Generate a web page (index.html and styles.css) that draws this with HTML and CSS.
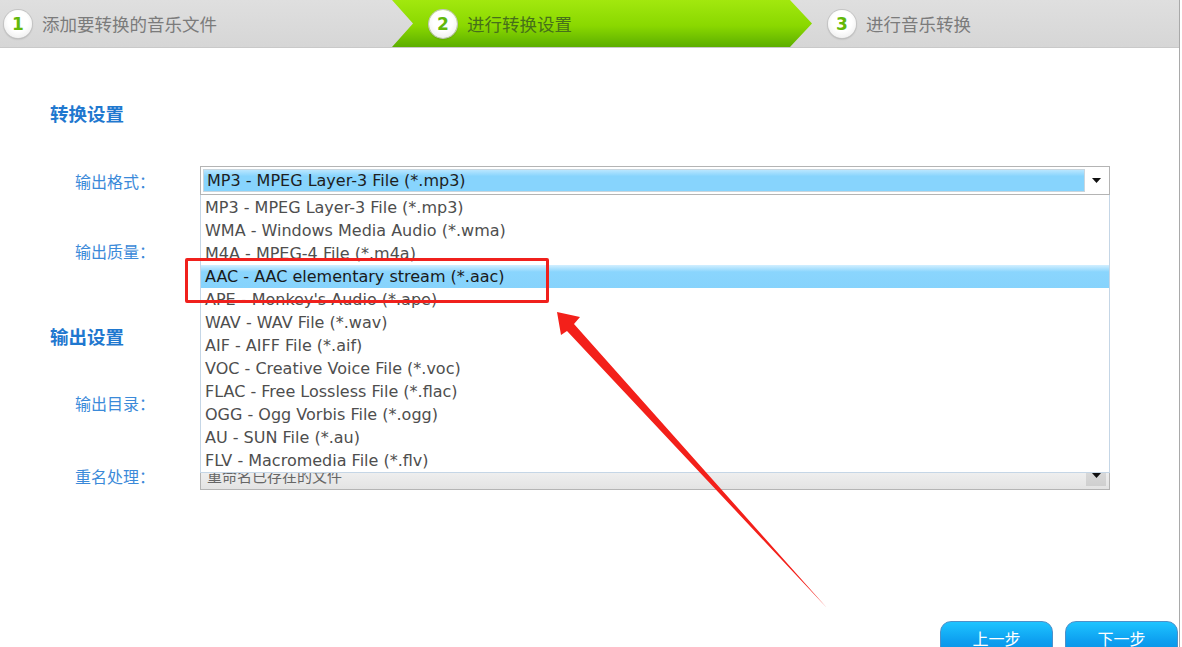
FILE: index.html
```html
<!DOCTYPE html>
<html lang="zh-CN">
<head>
  <meta charset="UTF-8">
  <title>音乐转换</title>
  <link rel="stylesheet" href="styles.css">
</head>
<body>

<div class="window">
  <div class="steps">
    <div class="step step-first">
      <span class="num">1</span>
      <span class="step-text">添加要转换的音乐文件</span>
    </div>
    <div class="step step-active">
      <span class="num">2</span>
      <span class="step-text">进行转换设置</span>
    </div>
    <div class="step step-last">
      <span class="num">3</span>
      <span class="step-text">进行音乐转换</span>
    </div>
  </div>

  <div class="content">
    <h2 class="section">转换设置</h2>

    <div class="row row-format">
      <label class="label">输出格式：</label>
      <div class="combo combo-open">
        <div class="combo-field">MP3 - MPEG Layer-3 File (*.mp3)</div>
        <span class="combo-btn">
          <svg width="9" height="5" viewBox="0 0 9 5"><path d="M0 0h9L4.5 5z" fill="#111"/></svg>
        </span>
        <ul class="combo-list">
          <li>MP3 - MPEG Layer-3 File (*.mp3)</li>
          <li>WMA - Windows Media Audio (*.wma)</li>
          <li>M4A - MPEG-4 File (*.m4a)</li>
          <li class="selected">AAC - AAC elementary stream (*.aac)</li>
          <li>APE - Monkey's Audio (*.ape)</li>
          <li>WAV - WAV File (*.wav)</li>
          <li>AIF - AIFF File (*.aif)</li>
          <li>VOC - Creative Voice File (*.voc)</li>
          <li>FLAC - Free Lossless File (*.flac)</li>
          <li>OGG - Ogg Vorbis File (*.ogg)</li>
          <li>AU - SUN File (*.au)</li>
          <li>FLV - Macromedia File (*.flv)</li>
        </ul>
      </div>
    </div>

    <!-- these two fields sit under the open list -->
    <div class="row row-quality">
      <label class="label">输出质量：</label>
      <div class="combo combo-gray">
        <div class="combo-field"></div>
        <span class="combo-btn"></span>
      </div>
    </div>

    <h2 class="section section-output">输出设置</h2>

    <div class="row row-dir">
      <label class="label">输出目录：</label>
      <div class="combo combo-gray">
        <div class="combo-field"></div>
      </div>
    </div>

    <div class="row row-rename">
      <label class="label">重名处理：</label>
      <div class="combo combo-gray">
        <div class="combo-field">重命名已存在的文件</div>
        <span class="combo-btn">
          <svg width="9" height="5" viewBox="0 0 9 5"><path d="M0 0h9L4.5 5z" fill="#111"/></svg>
        </span>
      </div>
    </div>
  </div>

  <div class="footer">
    <button class="nav-btn">上一步</button>
    <button class="nav-btn">下一步</button>
  </div>

  <!-- annotation drawn over the screenshot -->
  <div class="callout"></div>
  <svg class="arrow" width="1180" height="647" viewBox="0 0 1180 647">
    <path d="M557 312 L580 317 L574 324 L827 608 L567 331 L561 335 Z" fill="#f3201a"/>
  </svg>
</div>

</body>
</html>
```

FILE: styles.css
```css
body {
  margin: 0;
  background: #fff;
  font-family: "Noto Sans CJK SC", sans-serif;
  overflow: hidden;
}

.window {
  position: relative;
  width: 1179px;
  height: 647px;
  border-right: 1px solid #a9a9a9;
  overflow: hidden;
  background: #fff;
}

/* step bar */
.steps {
  display: flex;
  height: 47px;
  background: linear-gradient(#dfdfdf, #d6d6d6);
  border-bottom: 1px solid #c9c9c9;
}

.step {
  display: flex;
  align-items: center;
  height: 100%;
}

.step-first {
  width: 392px;
  padding-left: 4px;
  box-sizing: border-box;
}

.step-active {
  width: 420px;
  padding-left: 37px;
  box-sizing: border-box;
  background: linear-gradient(#a2e80e, #8ad800 55%, #5cae00);
  clip-path: polygon(0 0, calc(100% - 22px) 0, 100% 50%, calc(100% - 22px) 100%, 0 100%, 21px 50%);
}

.step-last {
  flex: 1;
  padding-left: 16px;
}

.num {
  width: 28px;
  height: 28px;
  border-radius: 50%;
  background: radial-gradient(circle at 50% 40%, #ffffff 45%, #e6e6e6 100%);
  box-shadow: 0 0 0 1px #c4c4c4, 0 1px 2px rgba(0,0,0,0.25);
  color: #62b80a;
  font-family: "DejaVu Sans", sans-serif;
  font-weight: bold;
  font-size: 17px;
  display: flex;
  align-items: center;
  justify-content: center;
  margin-right: 10px;
}

.step-text {
  font-size: 17.5px;
  color: #7b7b7b;
}

.step-active .step-text {
  color: #46701a;
}

/* form */
.content {
  padding-left: 50px;
}

.section {
  margin: 53px 0 0;
  font-size: 18.5px;
  line-height: 24px;
  font-weight: bold;
  color: #1f78cf;
}

.section-output {
  margin-top: 59px;
}

.row {
  display: flex;
  align-items: center;
  height: 29px;
  margin-top: 41px;
  padding-left: 25px;
}

.row-dir {
  margin-top: 40px;
}

.row-rename {
  margin-top: 44px;
}

.label {
  width: 125px;
  font-size: 16px;
  color: #3b8ad9;
}

.combo {
  position: relative;
  display: flex;
  align-items: center;
  width: 910px;
  height: 29px;
  box-sizing: border-box;
  border: 1px solid #b4b4b4;
  padding: 3px;
  background: #fff;
  font-family: "DejaVu Sans", sans-serif;
  font-size: 16px;
}

.combo-field {
  flex: 1;
  height: 21px;
  line-height: 21px;
  padding-left: 3px;
  color: #1e1e1e;
  white-space: nowrap;
}

.combo-open .combo-field {
  background: linear-gradient(#b9e6ff, #87d4fd 30%, #87d4fd);
  box-shadow: 0 0 0 1px #c9d6de;
}

.combo-btn {
  width: 20px;
  height: 21px;
  margin-left: 2px;
  display: flex;
  align-items: center;
  justify-content: center;
  background: #fff;
}

.combo-gray {
  background: linear-gradient(#f6f6f6, #e3e3e3);
  color: #555;
}

.combo-gray .combo-field {
  font-family: "Noto Sans CJK SC", sans-serif;
  font-size: 15px;
  color: #666;
}

.combo-gray .combo-btn {
  background: linear-gradient(#dedede, #cfcfcf);
  align-items: flex-start;
  padding-top: 8px;
  box-sizing: border-box;
}

/* open drop-down list */
.combo-list {
  position: absolute;
  top: 28px;
  left: -1px;
  width: 910px;
  box-sizing: border-box;
  margin: 0;
  padding: 1px 0 0;
  list-style: none;
  background: #fff;
  border: 1px solid #c5d6e6;
  border-top: none;
  z-index: 5;
}

.combo-list li {
  height: 23px;
  line-height: 23px;
  padding-left: 4px;
  color: #4e4e4e;
  white-space: nowrap;
}

.combo-list li.selected {
  background: linear-gradient(#d2efff, #8ad5fd 30%, #86d3fc);
  color: #1a1a1a;
}

/* bottom buttons */
.footer {
  display: flex;
  justify-content: flex-end;
  gap: 12px;
  padding-right: 1px;
  margin-top: 131px;
}

.nav-btn {
  width: 113px;
  height: 40px;
  border: 1px solid #4e90c8;
  border-radius: 11px;
  background: linear-gradient(#1ec4ff, #0d9ff0 50%, #0688dd);
  color: #fff;
  font-family: "Noto Sans CJK SC", sans-serif;
  font-size: 16px;
  padding: 0 0 6px;
}

/* red annotation */
.callout {
  position: absolute;
  left: 185px;
  top: 258px;
  width: 364px;
  height: 45px;
  box-sizing: border-box;
  border: 3px solid #f0201c;
  border-radius: 2px;
  z-index: 6;
}

.arrow {
  position: absolute;
  left: 0;
  top: 0;
  z-index: 6;
  pointer-events: none;
}
```
